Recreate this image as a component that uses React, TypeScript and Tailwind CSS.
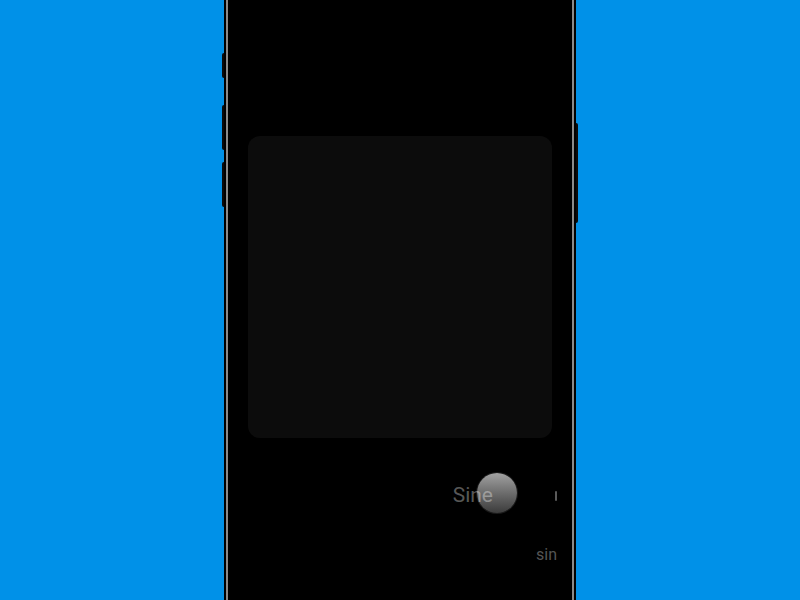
export default function App() {
  return (
    <div
      className="w-full h-[600px] bg-[#0091e8] flex justify-center overflow-hidden"
      style={{ fontFamily: 'Roboto, "Noto Sans", sans-serif' }}
    >
      {/* Phone body, taller than the viewport so only straight sides show */}
      <div className="relative w-[352px] h-[800px] -mt-[100px] bg-black rounded-[40px] p-[2px]">
        {/* Side buttons */}
        <div className="absolute left-[-2px] top-[153px] w-[2px] h-[25px] bg-[#0a0a0a] rounded-l-sm" />
        <div className="absolute left-[-2px] top-[205px] w-[2px] h-[45px] bg-[#0a0a0a] rounded-l-sm" />
        <div className="absolute left-[-2px] top-[262px] w-[2px] h-[45px] bg-[#0a0a0a] rounded-l-sm" />
        <div className="absolute right-[-2px] top-[223px] w-[2px] h-[100px] bg-[#0a0a0a] rounded-r-sm" />

        <div className="h-full rounded-[38px] border-2 border-[#8a8a8a] bg-black p-[1px]">
          <div className="h-full rounded-[36px] bg-black flex flex-col pt-[231px]">
            {/* Screen card */}
            <div className="mx-[19px] h-[302px] rounded-xl bg-[#0c0c0c]" />

            {/* Knob row */}
            <div className="mt-[39px] h-[40px] flex items-center justify-end pr-[14px]">
              <div className="relative">
                <div className="absolute left-[24px] top-[-12px] w-[40px] h-[40px] rounded-full bg-gradient-to-b from-[#a2a2a2] to-[#3c3c3c] ring-1 ring-[#1a1a1a]" />
                <span className="relative text-[21px] leading-none text-white/35">Sine</span>
              </div>
              <div className="ml-[62px] w-[2px] h-[10px] bg-[#5a5a5a] rounded-full -mt-[2px]" />
            </div>

            {/* Function label */}
            <div className="mt-[28px] flex justify-end pr-[14px]">
              <span className="text-[16px] leading-5 text-[#555555]">sin</span>
            </div>
          </div>
        </div>
      </div>
    </div>
  )
}
